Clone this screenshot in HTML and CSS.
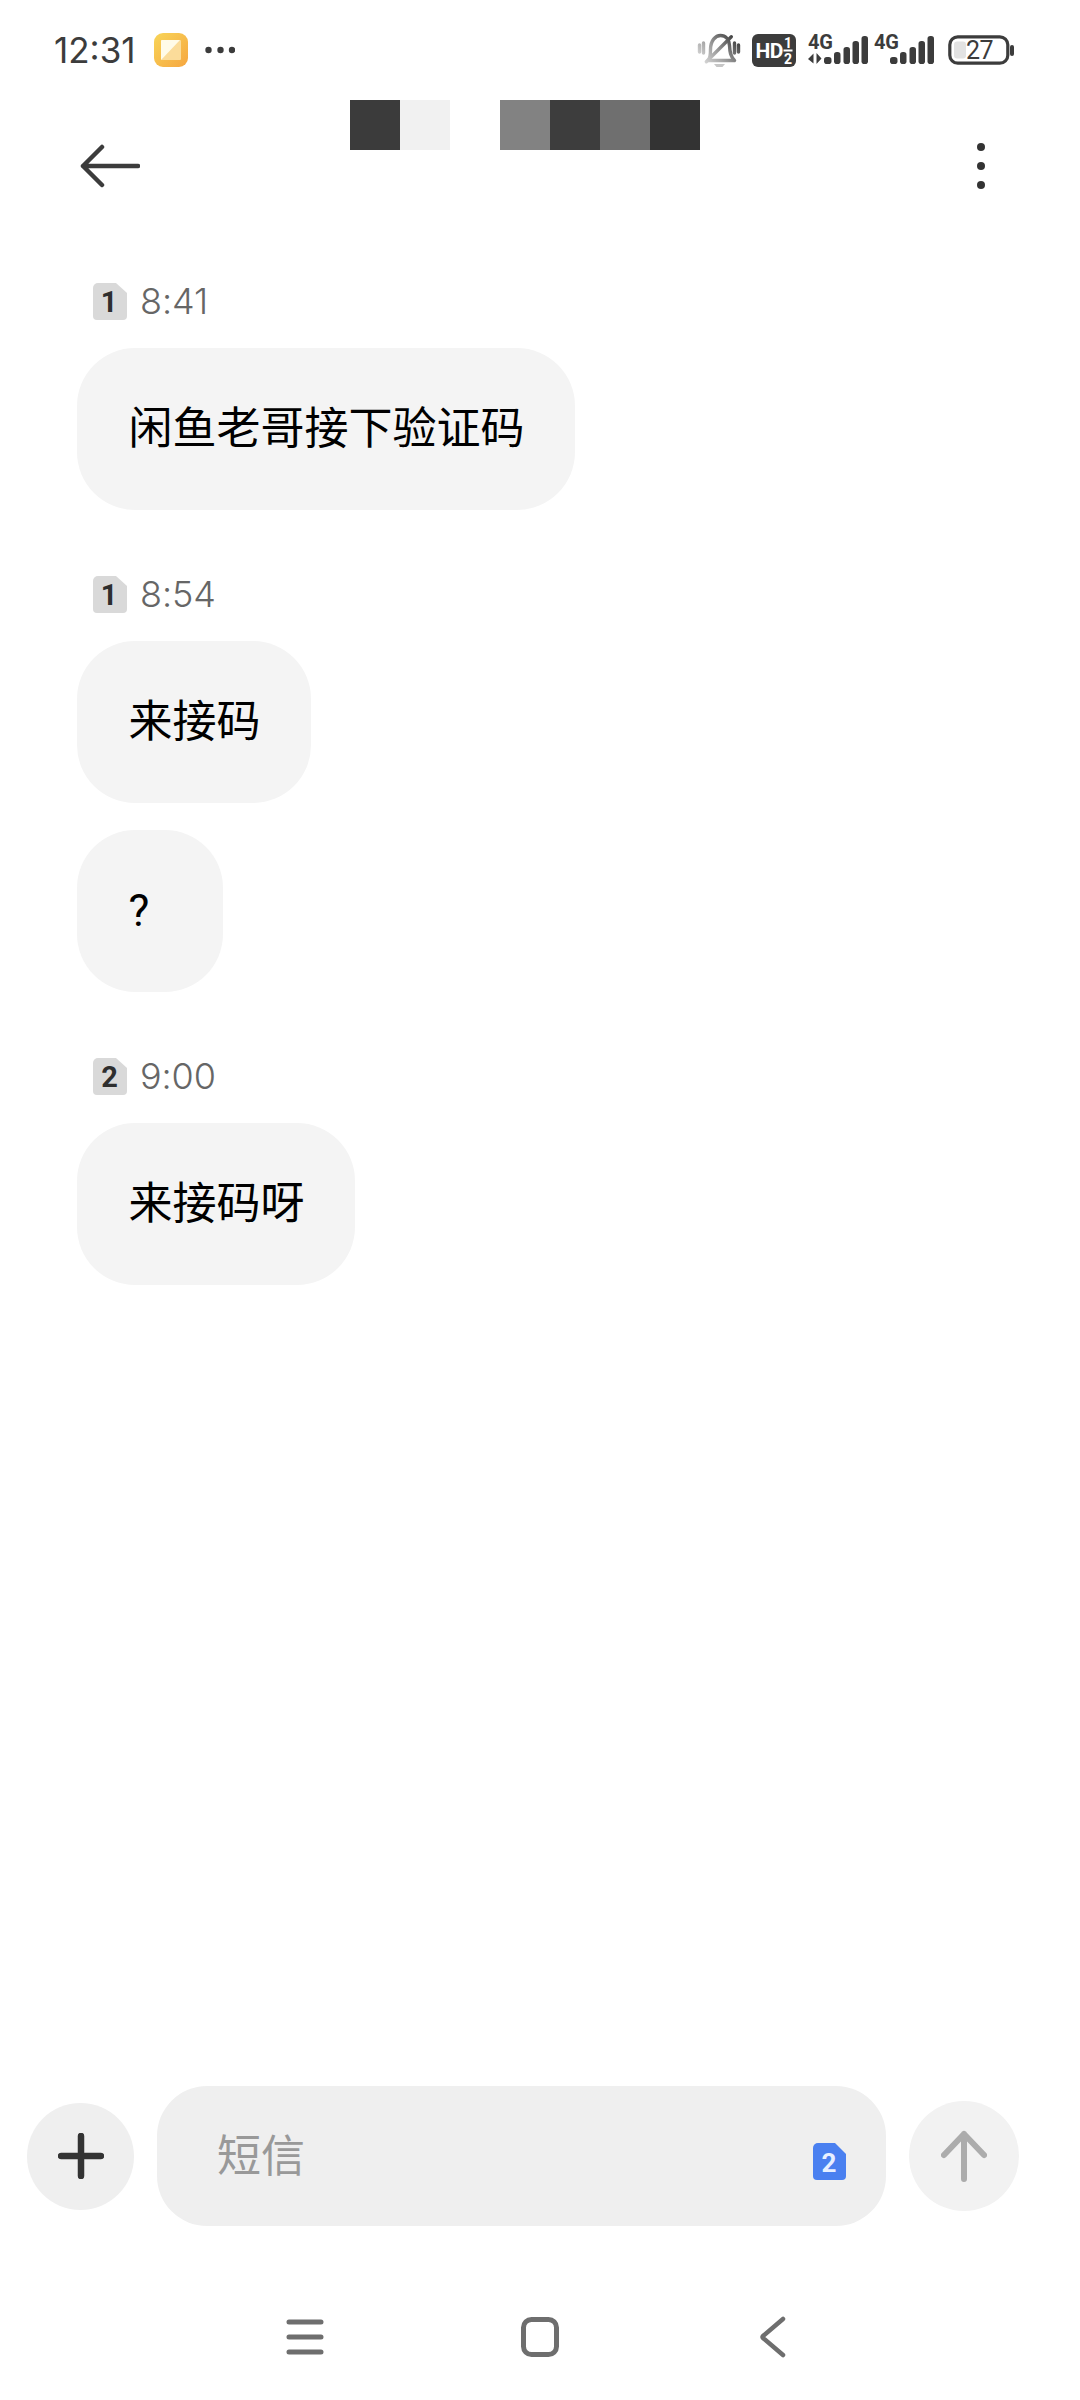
FILE: index.html
```html
<!DOCTYPE html>
<html lang="zh">
<head>
<meta charset="utf-8">
<title>短信</title>
<link rel="stylesheet" href="styles.css">
</head>
<body>
<div class="screen">
  <div class="status">
    <span class="clock">12:31</span>
    <svg class="app-icon" width="34" height="34" viewBox="0 0 34 34">
      <defs>
        <linearGradient id="appg" x1="0" y1="0" x2="1" y2="1"><stop offset="0" stop-color="#f8d558"/><stop offset="1" stop-color="#f6a640"/></linearGradient>
      </defs>
      <rect width="34" height="34" rx="9" fill="url(#appg)"/>
      <rect x="7" y="7" width="20" height="20" rx="1" fill="#fbdc9a"/>
      <path d="M7 27V8a1 1 0 0 1 1-1h18z" fill="#fffbe9"/>
    </svg>
    <svg class="more-dots" width="30" height="8" viewBox="0 0 30 8">
      <circle cx="3.5" cy="4" r="3.2"/><circle cx="15.5" cy="4" r="3.2"/><circle cx="27" cy="4" r="3.2"/>
    </svg>
    <div class="status-icons">
      <svg class="bell" width="42" height="36" viewBox="0 0 42 36">
        <defs>
          <linearGradient id="bellg" gradientUnits="userSpaceOnUse" x1="4" y1="32" x2="34" y2="4"><stop offset="0" stop-color="#dedede"/><stop offset="0.5" stop-color="#9a9a9a"/><stop offset="1" stop-color="#444"/></linearGradient>
        </defs>
        <g fill="none" stroke="url(#bellg)" stroke-width="3.400" stroke-linecap="round" stroke-linejoin="round">
          <path d="M10 28.500c2-2 2.500-5 2.500-11 0-9 5-14 10-14 5 0 8.500 4 9 10 .3 7 1 11 5 15z"/>
          <path d="M8.300 29.700L33.300 4.700"/>
          <path d="M1.500 13v7M5.500 11v10"/>
          <path d="M36.500 11v10M40.500 13v7"/>
        </g>
        <path d="M16 32h11l-2.500 3h-6z" fill="#c6c6c6"/>
      </svg>
      <svg class="hd" width="44" height="33" viewBox="0 0 44 33">
        <rect width="44" height="33" rx="6" fill="#3c3c3c"/>
        <text x="3.500" y="24" class="hd-text">HD</text>
        <text x="36" y="14" class="hd-sub">1</text>
        <text x="36" y="30" class="hd-sub">2</text>
        <rect x="31.500" y="15.500" width="9" height="2" fill="#fff"/>
      </svg>
      <svg class="signal" width="60" height="36" viewBox="0 0 60 36">
        <text x="0" y="16.500" class="net">4G</text>
        <path d="M5.500 21.500L0 27l5.500 4.500zM8.500 21v11l5-5.500z" fill="#3c3c3c"/>
        <rect x="16" y="25" width="7.500" height="7" rx="2.800"/>
        <rect x="26" y="20" width="6.500" height="12" rx="2.800"/>
        <rect x="35.500" y="15" width="6.500" height="17" rx="2.800"/>
        <rect x="44.500" y="9" width="6.500" height="23" rx="2.800"/>
        <rect x="53.500" y="4" width="6.500" height="28" rx="2.800"/>
      </svg>
      <svg class="signal" width="60" height="36" viewBox="0 0 60 36">
        <text x="0" y="16.500" class="net">4G</text>
        <rect x="16" y="25" width="7.500" height="7" rx="2.800"/>
        <rect x="26" y="20" width="6.500" height="12" rx="2.800"/>
        <rect x="35.500" y="15" width="6.500" height="17" rx="2.800"/>
        <rect x="44.500" y="9" width="6.500" height="23" rx="2.800"/>
        <rect x="53.500" y="4" width="6.500" height="28" rx="2.800"/>
      </svg>
      <svg class="battery" width="66" height="30" viewBox="0 0 66 30">
        <rect x="1.800" y="1.800" width="58" height="26.400" rx="8" fill="none" stroke="#3c3c3c" stroke-width="3.200"/>
        <rect x="6" y="6.500" width="12" height="17" rx="3" fill="#e2e2e2"/>
        <text x="18" y="24" class="batt-text">27</text>
        <rect x="62" y="10" width="4" height="11" rx="2" fill="#3c3c3c"/>
      </svg>
    </div>
  </div>

  <header class="topbar">
    <svg class="back" width="60" height="44" viewBox="0 0 60 44">
      <path d="M58 22H3M22 3L3 22l19 19" fill="none" stroke="#3c3c3c" stroke-width="4.500" stroke-linecap="round" stroke-linejoin="round"/>
    </svg>
    <div class="title-mask">
      <i class="px px-a"></i><i class="px px-b"></i><i class="px px-gap"></i><i class="px px-c"></i><i class="px px-d"></i><i class="px px-e"></i><i class="px px-f"></i>
    </div>
    <svg class="kebab" width="10" height="48" viewBox="0 0 10 48">
      <circle cx="5" cy="5" r="4"/><circle cx="5" cy="24" r="4"/><circle cx="5" cy="43" r="4"/>
    </svg>
  </header>

  <main class="thread">
    <section class="group">
      <div class="meta">
        <svg class="sim" width="34" height="37" viewBox="0 0 34 37"><path d="M5 0h18l11 10v23a4 4 0 0 1-4 4H4a4 4 0 0 1-4-4V5a5 5 0 0 1 5-5z" fill="#d9d9d9"/><text x="16" y="29" class="sim-num">1</text></svg>
        <span class="time">8:41</span>
      </div>
      <div class="bubble">闲鱼老哥接下验证码</div>
    </section>
    <section class="group">
      <div class="meta">
        <svg class="sim" width="34" height="37" viewBox="0 0 34 37"><path d="M5 0h18l11 10v23a4 4 0 0 1-4 4H4a4 4 0 0 1-4-4V5a5 5 0 0 1 5-5z" fill="#d9d9d9"/><text x="16" y="29" class="sim-num">1</text></svg>
        <span class="time">8:54</span>
      </div>
      <div class="bubble">来接码</div>
      <div class="bubble">?</div>
    </section>
    <section class="group">
      <div class="meta">
        <svg class="sim" width="34" height="37" viewBox="0 0 34 37"><path d="M5 0h18l11 10v23a4 4 0 0 1-4 4H4a4 4 0 0 1-4-4V5a5 5 0 0 1 5-5z" fill="#d9d9d9"/><text x="16.500" y="29" class="sim-num">2</text></svg>
        <span class="time">9:00</span>
      </div>
      <div class="bubble">来接码呀</div>
    </section>
  </main>

  <div class="composer">
    <div class="round-btn add">
      <svg width="46" height="46" viewBox="0 0 46 46"><path d="M3 23h40M23 3v40" fill="none" stroke="#333" stroke-width="6.500" stroke-linecap="round"/></svg>
    </div>
    <div class="input">
      <span class="placeholder">短信</span>
      <svg class="sim-blue" width="33" height="37" viewBox="0 0 33 37"><path d="M5 0h17l11 11v22a4 4 0 0 1-4 4H4a4 4 0 0 1-4-4V5a5 5 0 0 1 5-5z" fill="#4a80f0"/><text x="16" y="29" class="sim-num-blue">2</text></svg>
    </div>
    <div class="round-btn send">
      <svg width="46" height="52" viewBox="0 0 46 52"><path d="M23 49V4M3 25L23 4l20 21" fill="none" stroke="#acacac" stroke-width="6" stroke-linecap="round" stroke-linejoin="round"/></svg>
    </div>
  </div>

  <nav class="navbar">
    <svg width="38" height="36" viewBox="0 0 38 36"><path d="M3 3h32M3 18h32M3 33h32" fill="none" stroke="#6e6e6e" stroke-width="5" stroke-linecap="round"/></svg>
    <svg width="38" height="40" viewBox="0 0 38 40"><rect x="2.500" y="2.500" width="33" height="35" rx="8" fill="none" stroke="#6e6e6e" stroke-width="5"/></svg>
    <svg class="nav-back" width="26" height="42" viewBox="0 0 26 42"><path d="M23 3L3 20a1.500 1.500 0 0 0 0 2l20 17" fill="none" stroke="#6e6e6e" stroke-width="4.500" stroke-linecap="round" stroke-linejoin="round"/></svg>
  </nav>
</div>
</body>
</html>
```
FILE: styles.css
```css
* { box-sizing: border-box; }
html, body { margin: 0; padding: 0; background: #fff; }
body { font-family: Roboto, "Noto Sans CJK SC", sans-serif; }
.screen { width: 1080px; height: 2400px; display: flex; flex-direction: column; overflow: hidden; background: #fff; }

.status { height: 100px; flex: none; display: flex; align-items: center; padding: 0 66px 0 54px; color: #3c3c3c; }
.clock { font-family: Inter, Roboto, sans-serif; font-size: 35px; line-height: 1; width: 100px; }
.more-dots { margin-left: 17px; fill: #3c3c3c; }
.status-icons { margin-left: auto; display: flex; align-items: center; }
.status-icons svg { display: block; fill: #3c3c3c; overflow: visible; }
.hd { margin-left: 12px; }
.signal { margin-left: 6px; }
.hd + .signal { margin-left: 12px; }
.battery { margin-left: 14px; }
.hd-text { font: 700 21px Roboto, sans-serif; fill: #fff; letter-spacing: -0.5px; }
.hd-sub { font: 700 14px Roboto, sans-serif; fill: #fff; text-anchor: middle; }
.net { font: 700 20px Roboto, sans-serif; letter-spacing: -0.3px; }
.batt-text { font: 400 25px Roboto, sans-serif; fill: #3c3c3c; letter-spacing: -0.5px; }

.topbar { height: 132px; flex: none; display: flex; align-items: flex-start; padding: 0 94px 0 80px; }
.back { align-self: center; flex: none; }
.title-mask { display: flex; margin-left: 210px; }
.px { display: block; width: 50px; height: 50px; }
.px-a { background: #3b3b3b; }
.px-b { background: #f1f1f1; }
.px-gap { background: #fff; }
.px-c { background: #828282; }
.px-d { background: #3d3d3d; }
.px-e { background: #6f6f6f; }
.px-f { background: #333; }
.kebab { align-self: center; margin-left: auto; fill: #333; }

.thread { flex: 1; min-height: 0; display: flex; flex-direction: column; align-items: flex-start; gap: 66px; padding: 51px 0 0 77px; }
.group { display: flex; flex-direction: column; align-items: flex-start; }
.meta { display: flex; align-items: center; gap: 13px; height: 37px; padding-left: 16px; margin-bottom: 28px; }
.sim { display: block; flex: none; }
.sim-num { font: 700 29px Roboto, sans-serif; fill: #2e2e2e; text-anchor: middle; }
.time { font-family: Inter, Roboto, sans-serif; font-size: 36px; font-weight: 300; letter-spacing: -0.1px; line-height: 37px; color: #666; }
.bubble { height: 162px; min-width: 146px; display: flex; align-items: center; padding: 0 50.500px 0 51.500px; border-radius: 58px; background: #f4f4f4; color: #000; font-size: 44px; line-height: 1; }
.bubble + .bubble { margin-top: 27px; }

.composer { flex: none; height: 140px; display: flex; align-items: center; gap: 23px; padding: 0 61px 0 27px; }
.round-btn { flex: none; border-radius: 50%; display: flex; align-items: center; justify-content: center; }
.round-btn svg { display: block; }
.add { width: 107px; height: 107px; background: #efefef; }
.send { width: 110px; height: 110px; background: #f2f2f2; }
.input { flex: 1; height: 140px; display: flex; align-items: center; justify-content: space-between; padding: 0 40px 0 60px; border-radius: 50px; background: #efefef; }
.placeholder { font-size: 44px; line-height: 1; color: #999; margin-top: 2px; }
.sim-blue { display: block; margin-top: 10px; }
.sim-num-blue { font: 700 26px Roboto, sans-serif; fill: #e8f0ff; text-anchor: middle; }

.navbar { flex: none; height: 174px; display: flex; align-items: center; align-self: flex-start; gap: 197px; padding: 48px 0 0 286px; }
.navbar svg { display: block; }
.nav-back { margin-left: 4px; }
```
